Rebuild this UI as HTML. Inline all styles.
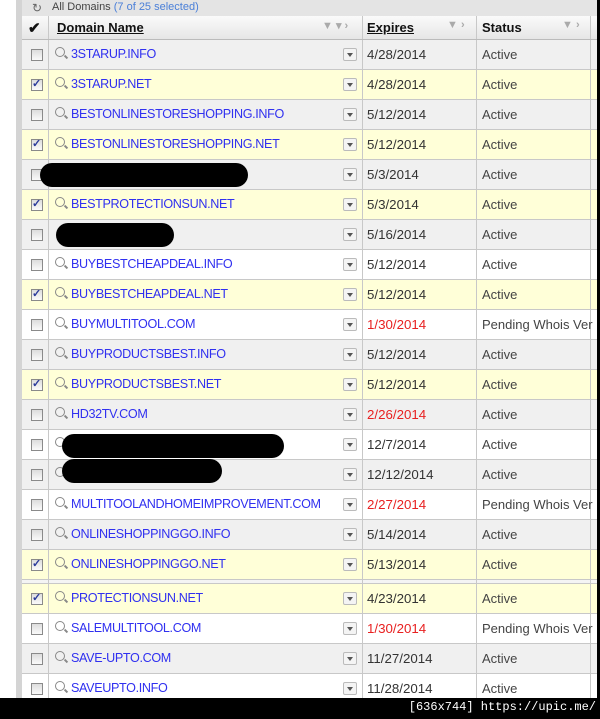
<!DOCTYPE html>
<html><head><style>
body{margin:0;width:600px;height:719px;background:#000;position:relative;overflow:hidden;font-family:"Liberation Sans",sans-serif;}
#lw{position:absolute;left:0;top:0;width:16px;height:698px;background:#fff}
#lg{position:absolute;left:16px;top:0;width:6px;height:698px;background:#d4d4d4}
#w{position:absolute;left:22px;top:0;width:575px;height:698px;overflow:hidden;background:#fff}
#top{height:16px;background:#e4e4e4;font-size:11px;color:#444;line-height:14px;padding-left:30px;position:relative}
#top span{color:#4a7fd8}
#top i{position:absolute;left:10px;top:1px;font-style:normal;font-size:12px;color:#666}
#hd{height:23px;background:linear-gradient(#fafafa,#e6e6e6);border-bottom:1px solid #bbb;position:relative;font-size:13px;font-weight:bold;color:#111}
.c{position:absolute;top:0;height:100%}
.r{height:29px;border-bottom:1px solid #c8c8c8;position:relative;font-size:12.5px;background:#f0f0f0}
.r.w{background:#fff}.r.y{background:#ffffd8}
.cb{position:absolute;left:9px;top:9px;width:10px;height:10px;border:1px solid #8a8a8a;background:linear-gradient(#ddd,#fafafa)}
.cb.k::after{content:"✓";position:absolute;left:0;top:-3px;font-size:11px;color:#2a3a9a;font-weight:bold}
.v1{position:absolute;left:26px;top:0;bottom:0;border-left:1px solid #c8c8c8}
.v2{position:absolute;left:340px;top:0;bottom:0;border-left:1px solid #c8c8c8}
.v3{position:absolute;left:454px;top:0;bottom:0;border-left:1px solid #c8c8c8}
.v4{position:absolute;left:568px;top:0;bottom:0;border-left:1px solid #c8c8c8}
.mg{position:absolute;left:33px;top:7px;width:8px;height:8px;border:1.5px solid #888;border-radius:50%}
.mg::after{content:"";position:absolute;left:8px;top:8px;width:4px;height:2px;background:#888;transform:rotate(45deg)}
.dn{position:absolute;left:49px;top:7px;color:#3030f0;font-size:12.6px;letter-spacing:-0.35px}
.dd{position:absolute;left:321px;top:8px;width:12px;height:11px;border:1px solid #bbb;background:#f4f4f4;border-radius:2px}
.dd::after{content:"";position:absolute;left:3px;top:4px;border:3px solid transparent;border-top:4px solid #555}
.ex{position:absolute;left:345px;top:7px;color:#333;font-size:13.3px}
.ex.red{color:#e82020}
.st{position:absolute;left:460px;top:7px;color:#444;white-space:nowrap;font-size:13px}
.bl{position:absolute;background:#000;border-radius:12px;height:24px;top:3px}
</style></head><body>
<div id="lw"></div><div id="lg"></div>
<div id="w">
<div id="top"><i>↻</i>All Domains <span>(7 of 25 selected)</span></div>
<div id="hd">
<div class="v1"></div><div class="v2"></div><div class="v3"></div><div class="v4"></div>
<div class="c" style="left:6px;top:3px;font-size:15px">✔</div>
<div class="c" style="left:35px;top:4px;text-decoration:underline">Domain Name</div>
<div class="c" style="left:300px;top:3px;color:#aaa;font-size:11px">▼ ▾ ›</div>
<div class="c" style="left:345px;top:4px;text-decoration:underline">Expires</div>
<div class="c" style="left:425px;top:3px;color:#aaa;font-size:11px">▼ ›</div>
<div class="c" style="left:460px;top:4px">Status</div>
<div class="c" style="left:540px;top:3px;color:#aaa;font-size:11px">▼ ›</div>
</div>

<div class="r"><div class="v1"></div><div class="v2"></div><div class="v3"></div><div class="v4"></div><div class="cb"></div><div class="mg"></div><div class="dn">3STARUP.INFO</div><div class="dd"></div><div class="ex">4/28/2014</div><div class="st">Active</div></div>
<div class="r y"><div class="v1"></div><div class="v2"></div><div class="v3"></div><div class="v4"></div><div class="cb k"></div><div class="mg"></div><div class="dn">3STARUP.NET</div><div class="dd"></div><div class="ex">4/28/2014</div><div class="st">Active</div></div>
<div class="r"><div class="v1"></div><div class="v2"></div><div class="v3"></div><div class="v4"></div><div class="cb"></div><div class="mg"></div><div class="dn">BESTONLINESTORESHOPPING.INFO</div><div class="dd"></div><div class="ex">5/12/2014</div><div class="st">Active</div></div>
<div class="r y"><div class="v1"></div><div class="v2"></div><div class="v3"></div><div class="v4"></div><div class="cb k"></div><div class="mg"></div><div class="dn">BESTONLINESTORESHOPPING.NET</div><div class="dd"></div><div class="ex">5/12/2014</div><div class="st">Active</div></div>
<div class="r"><div class="v1"></div><div class="v2"></div><div class="v3"></div><div class="v4"></div><div class="cb"></div><div class="bl" style="left:18px;width:208px"></div><div class="dd"></div><div class="ex">5/3/2014</div><div class="st">Active</div></div>
<div class="r y"><div class="v1"></div><div class="v2"></div><div class="v3"></div><div class="v4"></div><div class="cb k"></div><div class="mg"></div><div class="dn">BESTPROTECTIONSUN.NET</div><div class="dd"></div><div class="ex">5/3/2014</div><div class="st">Active</div></div>
<div class="r"><div class="v1"></div><div class="v2"></div><div class="v3"></div><div class="v4"></div><div class="cb"></div><div class="bl" style="left:34px;width:118px"></div><div class="dd"></div><div class="ex">5/16/2014</div><div class="st">Active</div></div>
<div class="r w"><div class="v1"></div><div class="v2"></div><div class="v3"></div><div class="v4"></div><div class="cb"></div><div class="mg"></div><div class="dn">BUYBESTCHEAPDEAL.INFO</div><div class="dd"></div><div class="ex">5/12/2014</div><div class="st">Active</div></div>
<div class="r y"><div class="v1"></div><div class="v2"></div><div class="v3"></div><div class="v4"></div><div class="cb k"></div><div class="mg"></div><div class="dn">BUYBESTCHEAPDEAL.NET</div><div class="dd"></div><div class="ex">5/12/2014</div><div class="st">Active</div></div>
<div class="r w"><div class="v1"></div><div class="v2"></div><div class="v3"></div><div class="v4"></div><div class="cb"></div><div class="mg"></div><div class="dn">BUYMULTITOOL.COM</div><div class="dd"></div><div class="ex red">1/30/2014</div><div class="st">Pending Whois Ver</div></div>
<div class="r"><div class="v1"></div><div class="v2"></div><div class="v3"></div><div class="v4"></div><div class="cb"></div><div class="mg"></div><div class="dn">BUYPRODUCTSBEST.INFO</div><div class="dd"></div><div class="ex">5/12/2014</div><div class="st">Active</div></div>
<div class="r y"><div class="v1"></div><div class="v2"></div><div class="v3"></div><div class="v4"></div><div class="cb k"></div><div class="mg"></div><div class="dn">BUYPRODUCTSBEST.NET</div><div class="dd"></div><div class="ex">5/12/2014</div><div class="st">Active</div></div>
<div class="r"><div class="v1"></div><div class="v2"></div><div class="v3"></div><div class="v4"></div><div class="cb"></div><div class="mg"></div><div class="dn">HD32TV.COM</div><div class="dd"></div><div class="ex red">2/26/2014</div><div class="st">Active</div></div>
<div class="r w"><div class="v1"></div><div class="v2"></div><div class="v3"></div><div class="v4"></div><div class="cb"></div><div class="mg"></div><div class="bl" style="left:40px;width:222px;top:4px"></div><div class="dd"></div><div class="ex">12/7/2014</div><div class="st">Active</div></div>
<div class="r"><div class="v1"></div><div class="v2"></div><div class="v3"></div><div class="v4"></div><div class="cb"></div><div class="mg"></div><div class="bl" style="left:40px;width:160px;top:-1px"></div><div class="dd"></div><div class="ex">12/12/2014</div><div class="st">Active</div></div>
<div class="r w"><div class="v1"></div><div class="v2"></div><div class="v3"></div><div class="v4"></div><div class="cb"></div><div class="mg"></div><div class="dn">MULTITOOLANDHOMEIMPROVEMENT.COM</div><div class="dd"></div><div class="ex red">2/27/2014</div><div class="st">Pending Whois Ver</div></div>
<div class="r"><div class="v1"></div><div class="v2"></div><div class="v3"></div><div class="v4"></div><div class="cb"></div><div class="mg"></div><div class="dn">ONLINESHOPPINGGO.INFO</div><div class="dd"></div><div class="ex">5/14/2014</div><div class="st">Active</div></div>
<div class="r y"><div class="v1"></div><div class="v2"></div><div class="v3"></div><div class="v4"></div><div class="cb k"></div><div class="mg"></div><div class="dn">ONLINESHOPPINGGO.NET</div><div class="dd"></div><div class="ex">5/13/2014</div><div class="st">Active</div></div>
<div class="r" style="height:3px;background:#f4f4f4"><div class="v1"></div><div class="v2"></div><div class="v3"></div><div class="v4"></div></div>
<div class="r y"><div class="v1"></div><div class="v2"></div><div class="v3"></div><div class="v4"></div><div class="cb k"></div><div class="mg"></div><div class="dn">PROTECTIONSUN.NET</div><div class="dd"></div><div class="ex">4/23/2014</div><div class="st">Active</div></div>
<div class="r w"><div class="v1"></div><div class="v2"></div><div class="v3"></div><div class="v4"></div><div class="cb"></div><div class="mg"></div><div class="dn">SALEMULTITOOL.COM</div><div class="dd"></div><div class="ex red">1/30/2014</div><div class="st">Pending Whois Ver</div></div>
<div class="r"><div class="v1"></div><div class="v2"></div><div class="v3"></div><div class="v4"></div><div class="cb"></div><div class="mg"></div><div class="dn">SAVE-UPTO.COM</div><div class="dd"></div><div class="ex">11/27/2014</div><div class="st">Active</div></div>
<div class="r w"><div class="v1"></div><div class="v2"></div><div class="v3"></div><div class="v4"></div><div class="cb"></div><div class="mg"></div><div class="dn">SAVEUPTO.INFO</div><div class="dd"></div><div class="ex">11/28/2014</div><div class="st">Active</div></div>
</div>
<div style="position:absolute;right:4px;top:700px;color:#fff;font-family:'Liberation Mono',monospace;font-size:12px">[636x744] https://upic.me/</div>
</body></html>
